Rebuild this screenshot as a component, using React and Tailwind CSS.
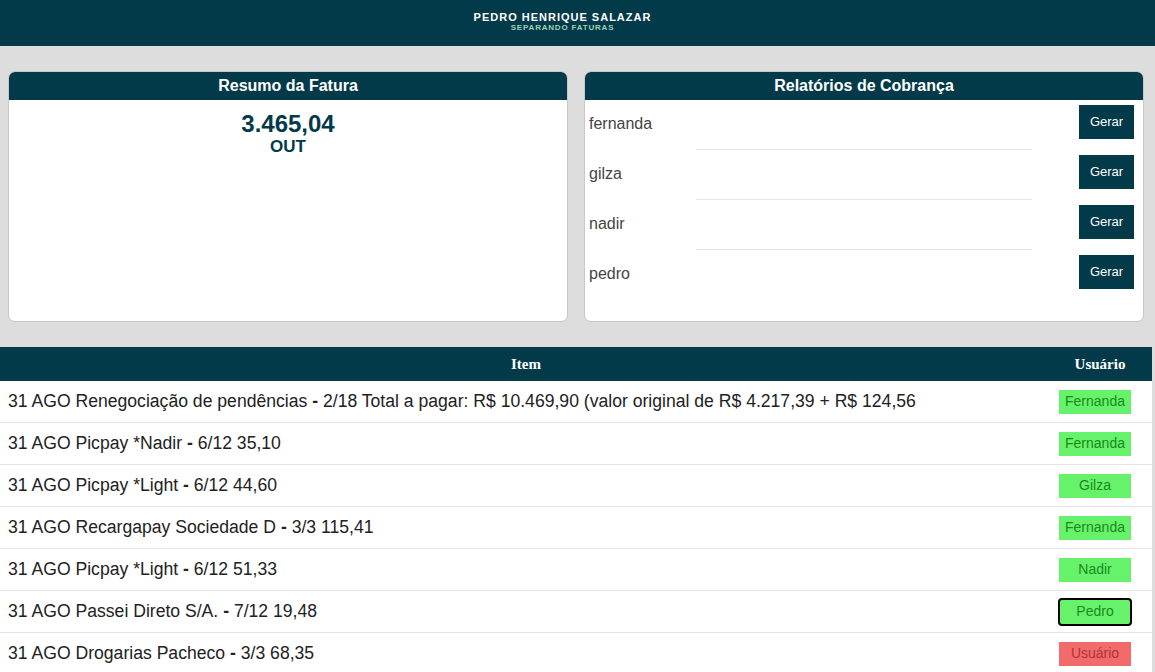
import React from "react";

const rows = [
  { a: "31 AGO Renegociação de pendências", b: "2/18 Total a pagar: R$ 10.469,90 (valor original de R$ 4.217,39 + R$ 124,56", u: "Fernanda", t: "g" },
  { a: "31 AGO Picpay *Nadir", b: "6/12 35,10", u: "Fernanda", t: "g" },
  { a: "31 AGO Picpay *Light", b: "6/12 44,60", u: "Gilza", t: "g" },
  { a: "31 AGO Recargapay Sociedade D", b: "3/3 115,41", u: "Fernanda", t: "g" },
  { a: "31 AGO Picpay *Light", b: "6/12 51,33", u: "Nadir", t: "g" },
  { a: "31 AGO Passei Direto S/A.", b: "7/12 19,48", u: "Pedro", t: "sel" },
  { a: "31 AGO Drogarias Pacheco", b: "3/3 68,35", u: "Usuário", t: "r" },
];

function Badge({ u, t }) {
  if (t === "sel")
    return (
      <div className="w-[74px] h-[28px] bg-[#66f26b] text-[#1a8a1a] text-[14px] border-2 border-black rounded-[4px] flex items-center justify-center">
        {u}
      </div>
    );
  if (t === "r")
    return (
      <div className="w-[72px] h-[24px] bg-[#f26b6b] text-[#b23333] text-[14px] flex items-center justify-center">
        {u}
      </div>
    );
  return (
    <div className="w-[72px] h-[24px] bg-[#66f26b] text-[#1a8a1a] text-[14px] flex items-center justify-center">
      {u}
    </div>
  );
}

export default function App() {
  return (
    <div className="min-h-[672px] bg-[#dddddd] font-['Liberation_Sans',Arial,sans-serif]">
      <header className="h-[46px] bg-[#033a4a] flex flex-col items-center justify-center pr-[30px] pb-[3px]">
        <div className="text-white text-[11px] font-bold tracking-[1px] leading-[12px]">PEDRO HENRIQUE SALAZAR</div>
        <div className="text-[#9fd0b4] text-[8px] font-bold tracking-[0.8px] leading-[9px]">SEPARANDO FATURAS</div>
      </header>

      <div className="flex gap-[16px] pl-[8px] pt-[25px]">
        <div className="w-[560px] h-[251px] bg-white border border-[#c8c8c8] rounded-[7px] overflow-hidden">
          <div className="h-[28px] bg-[#033a4a] text-white font-bold text-[16px] flex items-center justify-center">Resumo da Fatura</div>
          <div className="flex flex-col items-center pt-[11px] text-[#033a4a]">
            <div className="text-[24px] font-bold leading-[26px]">3.465,04</div>
            <div className="text-[17px] font-bold leading-[20px]">OUT</div>
          </div>
        </div>
        <div className="w-[560px] h-[251px] bg-white border border-[#c8c8c8] rounded-[7px] overflow-hidden">
          <div className="h-[28px] bg-[#033a4a] text-white font-bold text-[16px] flex items-center justify-center">Relatórios de Cobrança</div>
          <div className="flex flex-col">
            {["fernanda", "gilza", "nadir", "pedro"].map((n, i) => (
              <div key={n} className="h-[50px] relative flex items-start pl-[4px] pr-[9px]">
                <span className="text-[16px] text-[#444444] flex-1 mt-[15px] leading-[18px]">{n}</span>
                <button className="w-[55px] h-[34px] bg-[#033a4a] text-white text-[13px] mt-[5px]">Gerar</button>
                {i < 3 && <div className="absolute bottom-0 left-[111px] w-[336px] h-px bg-[#e4e4e4]" />}
              </div>
            ))}
          </div>
        </div>
      </div>

      <div className="mt-[25px] w-[1152px] bg-white">
        <div className="h-[34px] bg-[#033a4a] flex items-center text-white font-bold text-[15px] font-['Liberation_Serif',serif]">
          <div className="w-[1052px] text-center">Item</div>
          <div className="w-[100px] text-center pr-[4px]">Usuário</div>
        </div>
        {rows.map((r, i) => (
          <div key={i} className="h-[42px] flex items-center border-b border-[#e6e6e6]">
            <div className="w-[1052px] pl-[8px] text-[17.6px] text-[#222222] whitespace-nowrap overflow-hidden">
              {r.a} <b>-</b> {r.b}
            </div>
            <div className="w-[100px] flex justify-center pr-[14px]">
              <Badge u={r.u} t={r.t} />
            </div>
          </div>
        ))}
      </div>
    </div>
  );
}
